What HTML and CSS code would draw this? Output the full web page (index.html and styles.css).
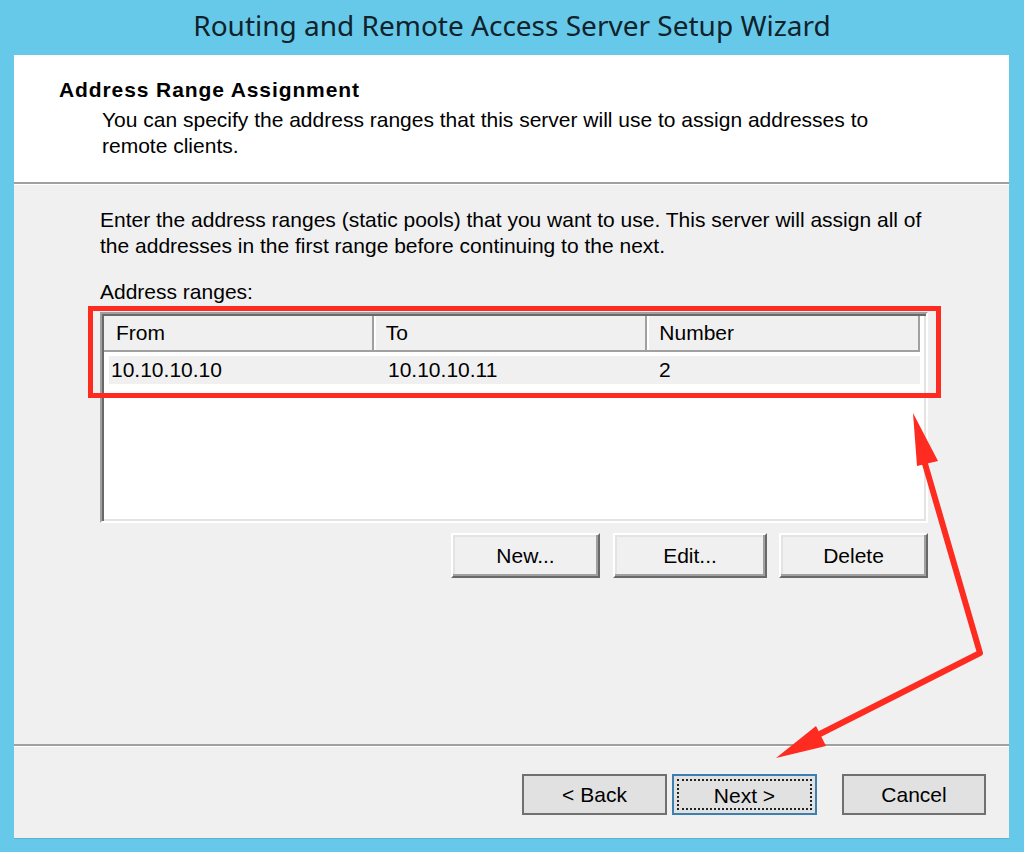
FILE: index.html
```html
<!DOCTYPE html>
<html lang="en">
<head>
  <meta charset="UTF-8">
  <title>Routing and Remote Access Server Setup Wizard</title>
  <link rel="stylesheet" href="styles.css">
</head>
<body>
  <div class="title-bar">Routing and Remote Access Server Setup Wizard</div>

  <div class="window">
    <div class="wiz-header">
      <div class="wiz-title">Address Range Assignment</div>
      <div class="wiz-subtitle">You can specify the address ranges that this server will use to assign addresses to remote clients.</div>
    </div>

    <div class="wiz-body">
      <p class="intro">Enter the address ranges (static pools) that you want to use. This server will assign all of the addresses in the first range before continuing to the next.</p>
      <div class="label">Address ranges:</div>

      <div class="list-view">
        <div class="list-head">
          <div class="col col-from">From</div>
          <div class="col col-to">To</div>
          <div class="col col-num">Number</div>
        </div>
        <div class="list-row">
          <div class="cell col-from">10.10.10.10</div>
          <div class="cell col-to">10.10.10.11</div>
          <div class="cell col-num">2</div>
        </div>
      </div>

      <div class="list-buttons">
        <button class="btn-classic btn-new">New...</button>
        <button class="btn-classic btn-edit">Edit...</button>
        <button class="btn-classic btn-delete">Delete</button>
      </div>
    </div>

    <div class="wiz-footer">
      <button class="btn-nav">&lt; Back</button>
      <button class="btn-nav btn-default"><span class="focus-ring">Next &gt;</span></button>
      <button class="btn-nav btn-cancel">Cancel</button>
    </div>
  </div>

  <!-- annotation drawn over the screenshot -->
  <svg class="annotation" width="1024" height="852" viewBox="0 0 1024 852">
    <rect x="90.5" y="308.5" width="848" height="87" fill="none" stroke="#fe2b21" stroke-width="5"/>
    <polyline points="921,450 980,653 808,740" fill="none" stroke="#fe2b21" stroke-width="6" stroke-linejoin="round"/>
    <polygon points="913,413 917,466 938,461" fill="#fe2b21"/>
    <polygon points="776,758 816,726 826,746" fill="#fe2b21"/>
  </svg>
</body>
</html>
```

FILE: styles.css
```css
body {
  margin: 0;
  width: 1024px;
  height: 852px;
  background: #66c9e9;
  font-family: 'Liberation Sans', Arial, sans-serif;
  font-size: 21px;
  color: #000;
  position: relative;
  overflow: hidden;
}

.title-bar {
  height: 55px;
  line-height: 50px;
  text-align: center;
  font-family: 'Noto Sans', 'Open Sans', sans-serif;
  font-size: 28px;
  color: #10222a;
}

.window {
  margin-left: 14px;
  width: 995px;
  height: 783px;
  background: #f0f0f0;
  display: flex;
  flex-direction: column;
  box-shadow: 0 1px 0 #5ab2cf;
}

/* header */

.wiz-header {
  height: 129px;
  box-sizing: border-box;
  padding: 22px 0 0 45px;
  background: #fff;
  border-bottom: 2px solid #a0a0a0;
  box-shadow: 0 1px 0 #fff;
  line-height: 26px;
}

.wiz-title {
  font-weight: bold;
  letter-spacing: 0.9px;
  margin-bottom: 4px;
}

.wiz-subtitle {
  margin-left: 43px;
  width: 790px;
}

/* body */

.wiz-body {
  flex: 1;
  padding: 23px 81px 0 86px;
  line-height: 26px;
}

.intro {
  margin: 0 0 20px 0;
}

.label {
  margin-bottom: 7px;
}

.list-view {
  height: 211px;
  box-sizing: border-box;
  background: #fff;
  border: 2px solid;
  border-color: #a0a0a0 #fff #fff #a0a0a0;
  box-shadow: inset 2px 2px 0 #696969, inset -2px -2px 0 #e3e3e3;
  padding: 2px 4px 2px 2px;
}

.list-head {
  display: flex;
  height: 34px;
  background: #f0f0f0;
  border-bottom: 2px solid #a0a0a0;
  margin-right: 2px;
}

.col {
  box-sizing: border-box;
  padding-left: 12px;
  line-height: 34px;
  border-right: 2px solid #a0a0a0;
  box-shadow: 2px 0 0 #fff;
}

.col-from { width: 270px; }
.col-to { width: 274px; }
.col-num { width: 273px; }

.list-row {
  display: flex;
  margin: 4px 2px 0 5px;
  height: 28px;
  background: #f0f0f0;
}

.cell {
  box-sizing: border-box;
  line-height: 28px;
}

.list-row .col-from { width: 265px; padding-left: 2px; }
.list-row .col-to { padding-left: 14px; }
.list-row .col-num { padding-left: 11px; width: 272px; }

.list-buttons {
  display: flex;
  justify-content: flex-end;
  margin-top: 10px;
}

.btn-classic {
  height: 45px;
  margin-left: 12px;
  font-family: inherit;
  font-size: 21px;
  color: #000;
  background: #f0f0f0;
  border: 2px solid;
  border-color: #fff #696969 #696969 #fff;
  box-shadow: inset -2px -2px 0 #a0a0a0, inset 2px 2px 0 #e3e3e3;
  padding: 0;
}

.btn-new { width: 149px; }
.btn-edit { width: 154px; margin-left: 13px; }
.btn-delete { width: 149px; }

/* footer */

.wiz-footer {
  border-top: 2px solid #a0a0a0;
  box-shadow: inset 0 1px 0 #fff;
  display: flex;
  justify-content: flex-end;
  padding: 28px 23px 23px 0;
}

.btn-nav {
  width: 145px;
  height: 41px;
  margin-left: 5px;
  font-family: inherit;
  font-size: 21px;
  color: #000;
  background: #e1e1e1;
  border: 2px solid #707070;
  padding: 0;
}

.btn-default {
  border-color: #3c7fb1;
  padding: 3px;
}

.focus-ring {
  display: block;
  height: 100%;
  box-sizing: border-box;
  border: 2px dotted #222;
  line-height: 29px;
}

.btn-cancel {
  width: 144px;
  margin-left: 25px;
}

.annotation {
  position: absolute;
  left: 0;
  top: 0;
  pointer-events: none;
}
```
